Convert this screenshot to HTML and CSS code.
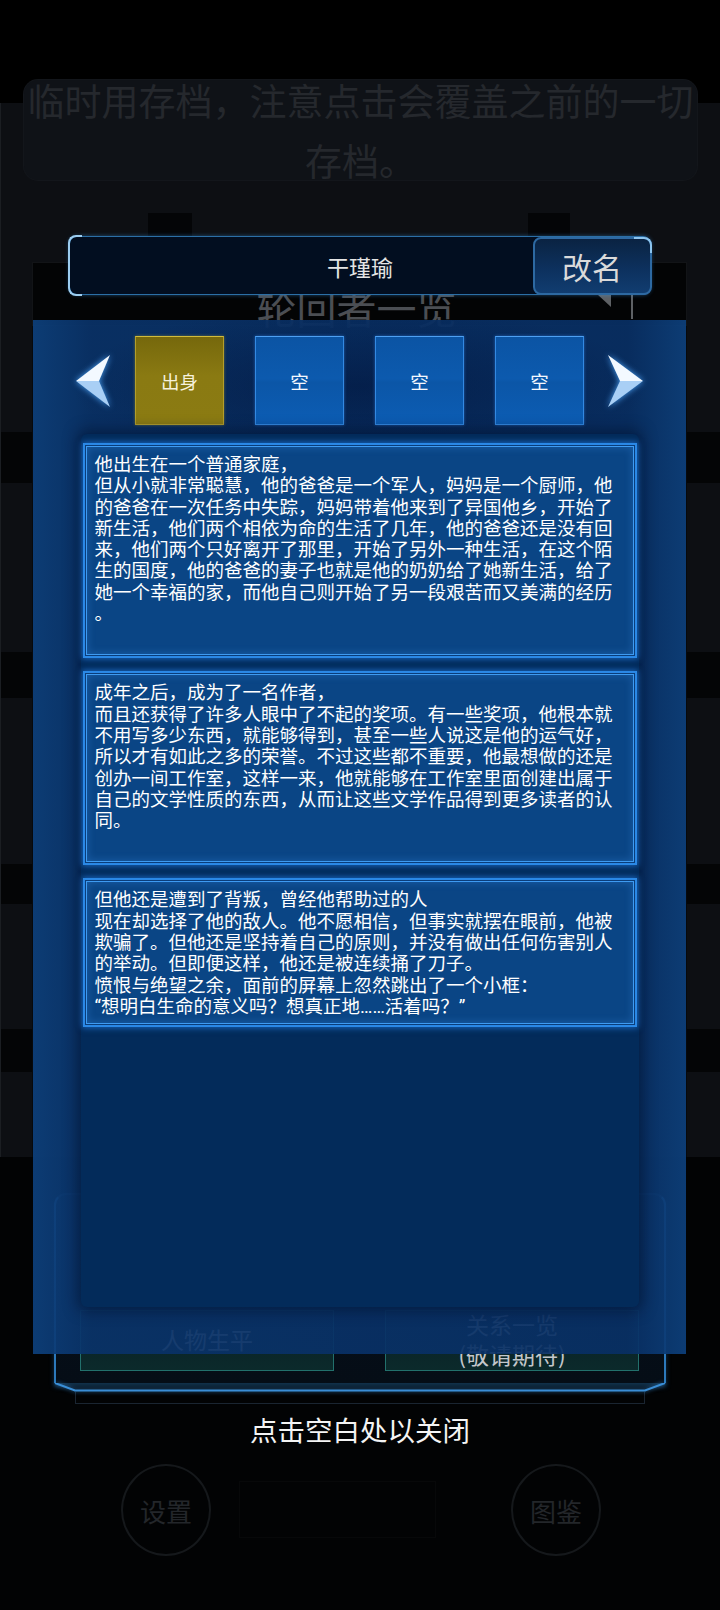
FILE: index.html
```html
<!DOCTYPE html>
<html lang="zh-CN">
<head>
<meta charset="utf-8">
<title>轮回者</title>
<link rel="stylesheet" href="styles.css">
</head>
<body>
<div class="game">
  <div class="status"></div>
  <div class="screen">
    <div class="notice"><p>临时用存档，注意点击会覆盖之前的一切<br>存档。</p></div>
    <div class="ears"><span class="ear"></span><span class="ear ear-r"></span></div>
    <div class="roster">
      <div class="roster-head">
        <span class="roster-title">轮回者一览</span>
        <svg class="roster-close" width="40" height="30" viewBox="0 0 40 30">
          <polygon points="0,5 14,5 14,18" fill="#5e6165"/>
          <path d="M22 4 H35 V30" stroke="#5e6165" stroke-width="2" fill="none"/>
        </svg>
      </div>
      <div class="roster-body"></div>
    </div>
  </div>
  <div class="frame">
    <div class="frame-btns">
      <div class="bg-btn"><span>人物生平</span></div>
      <div class="bg-btn"><span>关系一览<br>(敬请期待)</span></div>
    </div>
  </div>
  <svg class="frame-foot" width="612" height="9" viewBox="0 0 612 9">
    <path d="M1 0 L21 7.5 H591 L611 0" stroke="#3a8ed6" stroke-width="2" fill="none"/>
  </svg>
  <div class="frame-base"></div>
  <div class="dock">
    <div class="dock-btn">设置</div>
    <div class="dock-mid"></div>
    <div class="dock-btn">图鉴</div>
  </div>
</div>

<div class="modal">
  <div class="namebar">
    <span class="name">干瑾瑜</span>
    <div class="rename">改名</div>
  </div>
  <div class="panel">
    <div class="tabs">
      <svg class="arrow arrow-l" width="34" height="52" viewBox="0 0 34 52">
        <polygon points="0,26 34,0 23,26" fill="#f3f9ff"/>
        <polygon points="0,26 23,26 34,52" fill="#a9cff5"/>
      </svg>
      <div class="tab tab-on">出身</div>
      <div class="tab">空</div>
      <div class="tab">空</div>
      <div class="tab">空</div>
      <svg class="arrow arrow-r" width="35" height="52" viewBox="0 0 35 52">
        <polygon points="35,26 0,0 12,26" fill="#f3f9ff"/>
        <polygon points="35,26 12,26 0,52" fill="#a9cff5"/>
      </svg>
    </div>
    <div class="content">
      <div class="entry entry-tail">他出生在一个普通家庭，<br>但从小就非常聪慧，他的爸爸是一个军人，妈妈是一个厨师，他<br>的爸爸在一次任务中失踪，妈妈带着他来到了异国他乡，开始了<br>新生活，他们两个相依为命的生活了几年，他的爸爸还是没有回<br>来，他们两个只好离开了那里，开始了另外一种生活，在这个陌<br>生的国度，他的爸爸的妻子也就是他的奶奶给了她新生活，给了<br>她一个幸福的家，而他自己则开始了另一段艰苦而又美满的经历<br>。</div>
      <div class="entry entry-tail">成年之后，成为了一名作者，<br>而且还获得了许多人眼中了不起的奖项。有一些奖项，他根本就<br>不用写多少东西，就能够得到，甚至一些人说这是他的运气好，<br>所以才有如此之多的荣誉。不过这些都不重要，他最想做的还是<br>创办一间工作室，这样一来，他就能够在工作室里面创建出属于<br>自己的文学性质的东西，从而让这些文学作品得到更多读者的认<br>同。</div>
      <div class="entry">但他还是遭到了背叛，曾经他帮助过的人<br>现在却选择了他的敌人。他不愿相信，但事实就摆在眼前，他被<br>欺骗了。但他还是坚持着自己的原则，并没有做出任何伤害别人<br>的举动。但即便这样，他还是被连续捅了刀子。<br>愤恨与绝望之余，面前的屏幕上忽然跳出了一个小框：<br>“想明白生命的意义吗？想真正地……活着吗？”</div>
    </div>
  </div>
  <p class="hint">点击空白处以关闭</p>
</div>
</body>
</html>
```

FILE: styles.css
```css
* { box-sizing: border-box; margin: 0; padding: 0; }
html, body { width: 720px; height: 1610px; background: #000; overflow: hidden; }
body {
  position: relative;
  font-family: "Noto Sans CJK SC", "Noto Sans", sans-serif;
}

/* ---------- background game screen (dimmed) ---------- */
.game { height: 1610px; display: flex; flex-direction: column; background: #020304; }
.status { flex: none; height: 103px; background: #000; }
.screen {
  flex: none;
  height: 1054px;
  display: flex;
  flex-direction: column;
  border-left: 1px solid #1b1e22;
  background: linear-gradient(180deg,
    #0d0f13 0, #0d0f13 329px,
    #040506 329px, #040506 380px,
    #0d0f13 380px, #0d0f13 549px,
    #040506 549px, #040506 595px,
    #0d0f13 595px, #0d0f13 761px,
    #040506 761px, #040506 801px,
    #0d0f13 801px, #0d0f13 926px,
    #040506 926px, #040506 969px,
    #0d0f13 969px, #0d0f13 100%);
}
.notice {
  flex: none;
  margin: -23px 23px 0;
  height: 100px;
  border-radius: 14px;
  background: #0f1217;
  box-shadow: 0 0 0 1px #13161b;
  display: flex;
  align-items: center;
  justify-content: center;
  text-align: center;
  font-size: 37px;
  line-height: 60px;
  color: #25282d;
  white-space: nowrap;
}
.ears { flex: none; margin-top: 33px; height: 24px; display: flex; }
.ear { width: 44px; background: #040507; margin-left: 147px; }
.ear-r { width: 42px; margin-left: 336px; }
.roster {
  flex: 1;
  margin: 25px 33px 0 31px;
  display: flex;
  flex-direction: column;
  background: #07090c;
}
.roster-head {
  flex: none;
  height: 64px;
  display: grid;
  background: #030405;
  box-shadow: inset 0 0 0 1px #121417;
}
.roster-title {
  grid-area: 1 / 1;
  justify-self: center;
  padding-top: 25px;
  margin-left: -6px;
  font-size: 40px;
  line-height: 40px;
  color: #4b4e53;
}
.roster-close { grid-area: 1 / 1; justify-self: end; margin: 27px 50px 0 0; }
.roster-body { flex: 1; }

.frame {
  flex: none;
  margin: 36px 0 0 54px;
  width: 612px;
  height: 190px;
  border: 2px solid #2c79bb;
  border-top-color: #152c40;
  border-bottom: none;
  border-radius: 12px 12px 0 0;
  background: linear-gradient(180deg, #06101a, #050d16);
  box-shadow: 0 4px 5px rgba(50, 140, 220, .35);
  padding: 115px 0 0 24px;
}
.frame-btns { display: flex; gap: 51px; }
.bg-btn {
  width: 254px;
  height: 61px;
  display: flex;
  align-items: center;
  justify-content: center;
  text-align: center;
  border: 1px solid #22706c;
  background: linear-gradient(180deg, #0a1d24, #0b2a2b);
  font-size: 23px;
  line-height: 30px;
  color: #c3c7cb;
}
.bg-btn span { margin-top: -4px; }
.frame-foot { flex: none; display: block; margin-left: 54px; filter: drop-shadow(0 0 2px rgba(60, 150, 230, .7)); }
.frame-base {
  flex: none;
  margin: 0 75px;
  height: 12px;
  border: 1px solid #1a2531;
  border-top: none;
}
.dock { flex: none; margin-top: 60px; padding-left: 121px; display: flex; align-items: flex-start; }
.dock-btn {
  width: 90px;
  height: 92px;
  border-radius: 50%;
  border: 2px solid #15181b;
  display: flex;
  align-items: center;
  justify-content: center;
  font-size: 26px;
  color: #23262a;
}
.dock-mid {
  width: 197px;
  height: 57px;
  margin: 17px 75px 0 28px;
  border: 1px solid #070809;
}

/* ---------- modal overlay ---------- */
.modal {
  position: absolute;
  top: 0;
  left: 0;
  width: 720px;
  height: 1610px;
  display: flex;
  flex-direction: column;
}
.namebar {
  position: relative;
  flex: none;
  margin: 236px 0 0 69px;
  width: 582px;
  height: 59px;
  display: grid;
  align-items: center;
  border: 1.5px solid #2b6fa6;
  border-radius: 8px;
  background: #020e20;
  box-shadow: 0 0 4px rgba(60, 150, 230, .45);
}
.namebar::before {
  content: "";
  position: absolute;
  left: -2px;
  top: -2px;
  bottom: -2px;
  width: 12px;
  border: 2px solid #9ccdf0;
  border-right: none;
  border-radius: 8px 0 0 8px;
}
.name {
  grid-area: 1 / 1;
  justify-self: center;
  font-size: 22px;
  color: #e4e4e4;
}
.rename {
  position: relative;
  grid-area: 1 / 1;
  justify-self: end;
  margin-right: -1.5px;
  width: 119px;
  height: 58px;
  display: flex;
  align-items: center;
  justify-content: center;
  border: 2px solid #2d69a2;
  border-radius: 8px;
  background: linear-gradient(180deg, #0a2342 0%, #0d3260 60%, #113d70 100%);
  font-size: 30px;
  color: #dadada;
}
.rename::after {
  content: "";
  position: absolute;
  right: -2px;
  top: -2px;
  width: 16px;
  height: 14px;
  border: 2px solid #8cc4ee;
  border-left: none;
  border-bottom: none;
  border-radius: 0 8px 0 0;
}

.panel {
  flex: none;
  margin: 25px 0 0 33px;
  width: 653px;
  height: 1034px;
  display: flex;
  flex-direction: column;
  background:
    radial-gradient(ellipse 290px 80px at 50% 66px, rgba(2, 22, 62, .6), rgba(2, 22, 62, 0)),
    linear-gradient(90deg, rgba(13, 64, 124, .93) 0%, rgba(9, 50, 104, .93) 9%, rgba(8, 47, 100, .93) 91%, rgba(13, 64, 124, .93) 100%);
}
.tabs {
  flex: none;
  margin-top: 16px;
  height: 89px;
  padding-left: 43px;
  display: flex;
  align-items: center;
  gap: 31px;
}
.arrow { flex: none; display: block; filter: drop-shadow(0 0 3px rgba(80, 170, 255, .95)); }
.arrow-l { margin-right: -6px; }
.arrow-r { margin-left: -7px; }
.tab {
  flex: none;
  width: 89px;
  height: 89px;
  display: flex;
  align-items: center;
  justify-content: center;
  border: 1px solid #3389e2;
  border-top-color: #4ea0f2;
  background: linear-gradient(180deg, #0b54a4 0%, #0c5aae 48%, #0b56a7 52%, #0c5db4 100%);
  box-shadow: 0 0 3px rgba(60, 150, 255, .5);
  font-size: 18.5px;
  color: #f4f8ff;
}
.tab-on {
  border-color: #b49e2a;
  border-top-color: #d2bc3c;
  background: linear-gradient(180deg, #76680c 0%, #8a7a12 45%, #8b7b12 100%);
  box-shadow: 0 0 3px rgba(200, 180, 40, .45);
  color: #f6f1dc;
}
.content {
  flex: none;
  margin: 9px 0 0 48px;
  width: 558px;
  height: 873px;
  padding: 9px 2px 0;
  display: flex;
  flex-direction: column;
  gap: 13px;
  border-radius: 6px;
  background: #032b5a;
  box-shadow: 0 0 14px 4px rgba(1, 16, 44, .55);
}
.entry {
  border: 2px solid #2a88e6;
  background: #0a4585;
  box-shadow:
    0 0 6px 1px rgba(40, 140, 255, .6),
    inset 0 0 0 1px #0a3d7a,
    inset 0 0 0 2px #3e9bf2,
    inset 0 0 9px 2px rgba(70, 160, 255, .3);
  padding: 10px 8px 7px 9.5px;
  font-family: Roboto, "Noto Sans CJK SC", sans-serif;
  font-size: 18.5px;
  line-height: 21.3px;
  color: #fff;
  white-space: nowrap;
}
.entry-tail { padding-bottom: 31px; }

.hint {
  flex: none;
  margin-top: 57px;
  text-align: center;
  font-size: 27.5px;
  line-height: 36px;
  color: #f4f4f4;
}
```
